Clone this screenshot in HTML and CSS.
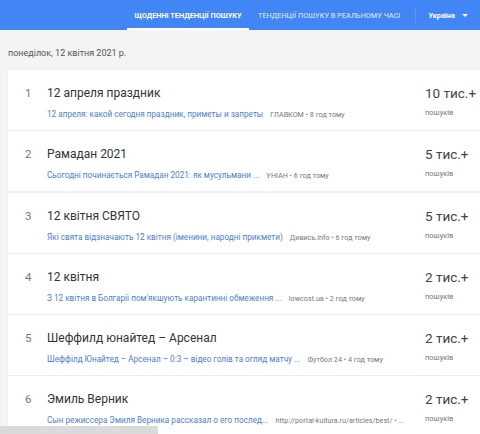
FILE: index.html
```html
<!DOCTYPE html>
<html lang="uk">
<head>
<meta charset="utf-8">
<link rel="stylesheet" href="styles.css">
</head>
<body>
<header class="top">
  <div class="tab active">ЩОДЕННІ ТЕНДЕНЦІЇ ПОШУКУ</div>
  <div class="tab">ТЕНДЕНЦІЇ ПОШУКУ В РЕАЛЬНОМУ ЧАСІ</div>
  <div class="sep"></div>
  <div class="geo">Україна <span class="caret"></span></div>
</header>
<main class="main">
  <div class="date">понеділок, 12 квітня 2021 р.</div>
  <div class="list">
    <div class="card">
      <div class="idx">1</div>
      <div class="body">
        <div class="title">12 апреля праздник</div>
        <div class="sub"><span class="link">12 апреля: какой сегодня праздник, приметы и запреты</span> <span class="src">ГЛАВКОМ • 8 год тому</span></div>
      </div>
      <div class="count"><div class="num">10 тис.+</div><div class="lbl">пошуків</div></div>
    </div>
    <div class="card">
      <div class="idx">2</div>
      <div class="body">
        <div class="title">Рамадан 2021</div>
        <div class="sub"><span class="link">Сьогодні починається Рамадан 2021: як мусульмани ...</span> <span class="src">УНІАН • 6 год тому</span></div>
      </div>
      <div class="count"><div class="num">5 тис.+</div><div class="lbl">пошуків</div></div>
    </div>
    <div class="card">
      <div class="idx">3</div>
      <div class="body">
        <div class="title">12 квітня СВЯТО</div>
        <div class="sub"><span class="link">Які свята відзначають 12 квітня (іменини, народні прикмети)</span> <span class="src">Дивись.info • 6 год тому</span></div>
      </div>
      <div class="count"><div class="num">5 тис.+</div><div class="lbl">пошуків</div></div>
    </div>
    <div class="card">
      <div class="idx">4</div>
      <div class="body">
        <div class="title">12 квітня</div>
        <div class="sub"><span class="link">З 12 квітня в Болгарії пом'якшують карантинні обмеження ...</span> <span class="src">lowcost.ua • 2 год тому</span></div>
      </div>
      <div class="count"><div class="num">2 тис.+</div><div class="lbl">пошуків</div></div>
    </div>
    <div class="card">
      <div class="idx">5</div>
      <div class="body">
        <div class="title">Шеффилд юнайтед – Арсенал</div>
        <div class="sub"><span class="link">Шеффілд Юнайтед – Арсенал – 0:3 – відео голів та огляд матчу ...</span> <span class="src">Футбол 24 • 4 год тому</span></div>
      </div>
      <div class="count"><div class="num">2 тис.+</div><div class="lbl">пошуків</div></div>
    </div>
    <div class="card">
      <div class="idx">6</div>
      <div class="body">
        <div class="title">Эмиль Верник</div>
        <div class="sub"><span class="link">Сын режиссера Эмиля Верника рассказал о его послед...</span> <span class="src">http://portal-kultura.ru/articles/best/ • ...</span></div>
      </div>
      <div class="count"><div class="num">2 тис.+</div><div class="lbl">пошуків</div></div>
    </div>
  </div>
</main>
<div class="hscroll"></div>
</body>
</html>
```
FILE: styles.css
```css
html, body {
  margin: 0;
  padding: 0;
  height: 434px;
  overflow: hidden;
}
body {
  background: #f4f4f4;
  font-family: Roboto, "Noto Sans", Arial, sans-serif;
  color: #333;
  position: relative;
}
.top {
  height: 30px;
  background: #4285f4;
  display: flex;
  align-items: stretch;
  padding-left: 127px;
  box-sizing: border-box;
}
.tab {
  font-size: 7.3px;
  font-weight: 500;
  color: rgba(255, 255, 255, 0.72);
  display: flex;
  align-items: center;
  padding: 0 9px;
  box-sizing: border-box;
  border-bottom: 2px solid transparent;
  padding-top: 2px;
}
.tab.active {
  color: #fff;
  font-weight: 700;
  border-bottom-color: #fff;
  width: 122px;
  justify-content: center;
  padding: 2px 0 0;
}
.sep {
  width: 1px;
  margin: 7px 0 7px 6px;
  background: rgba(255, 255, 255, 0.15);
}
.geo {
  color: #fff;
  font-size: 7.3px;
  font-weight: 700;
  display: flex;
  align-items: center;
  padding-left: 12px;
}
.caret {
  display: inline-block;
  width: 0;
  height: 0;
  margin-left: 7px;
  border-left: 3px solid transparent;
  border-right: 3px solid transparent;
  border-top: 3px solid #fff;
}
.main {
  padding-left: 8px;
}
.date {
  font-size: 9px;
  color: #555;
  height: 40px;
  line-height: 47px;
}
.list {
  display: flex;
  flex-direction: column;
  gap: 1.3px;
}
.card {
  background: #fff;
  height: 60px;
  display: flex;
  box-shadow: 0 0 1px rgba(0, 0, 0, 0.08);
}
.idx {
  flex: none;
  width: 39px;
  box-sizing: border-box;
  padding-left: 17px;
  font-size: 11.5px;
  color: #777;
  padding-top: 16px;
}
.body {
  flex: 1;
  min-width: 0;
  padding-top: 15px;
}
.title {
  font-size: 12px;
  color: #333;
  line-height: 16px;
}
.sub {
  margin-top: 5px;
  white-space: nowrap;
  line-height: 12px;
}
.link {
  font-size: 8.2px;
  color: #4d7ed1;
}
.src {
  font-size: 7.2px;
  color: #777;
  margin-left: 3px;
}
.count {
  flex: none;
  width: 55px;
  padding-top: 14px;
  white-space: nowrap;
}
.num {
  font-size: 13.5px;
  color: #444;
  line-height: 18px;
}
.lbl {
  font-size: 7.5px;
  color: #777;
  margin-top: 6px;
}
.hscroll {
  position: absolute;
  left: 0;
  bottom: 0;
  width: 158px;
  height: 8px;
  background: #dadada;
}
```
